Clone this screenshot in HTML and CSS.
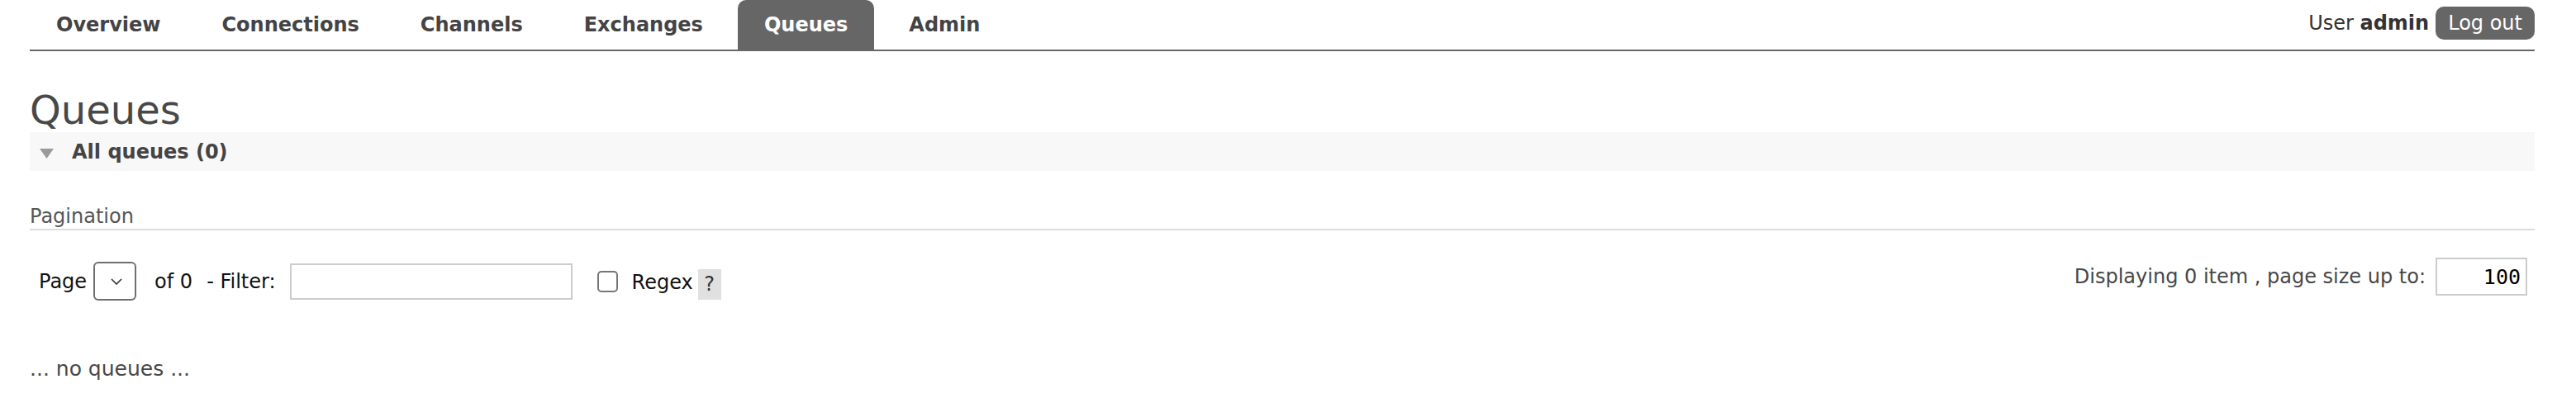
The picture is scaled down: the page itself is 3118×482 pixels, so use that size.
FILE: index.html
```html
<!DOCTYPE html>
<html lang="en">
<head>
    <meta charset="UTF-8">
    <meta name="viewport" content="width=device-width, initial-scale=1.0">
    <title>RabbitMQ Management</title>
    <link rel="stylesheet" href="styles.css">
</head>
<body>
    <div id="header">
        <ul id="tabs">
            <li><a href="#">Overview</a></li>
            <li><a href="#">Connections</a></li>
            <li><a href="#">Channels</a></li>
            <li><a href="#">Exchanges</a></li>
            <li><a href="#" class="selected">Queues</a></li>
            <li><a href="#">Admin</a></li>
        </ul>
        <div id="login">
            <span>User <b>admin</b></span>
            <button id="logout">Log out</button>
        </div>
    </div>

    <div id="main">
        <h1>Queues</h1>
        <div class="section">
            <h2>
                <svg class="arrow" width="17" height="12" viewBox="0 0 17 12"><polygon points="0,0 17,0 8.5,12" fill="#9a9a9a"/></svg>
                All queues (0)
            </h2>
            <div class="hider">
                <h3>Pagination</h3>
                <div class="pagination">
                    <div class="pagination-left">
                        <label for="page">Page</label>
                        <div class="select-wrap">
                            <select id="page"></select>
                            <svg class="chevron" width="14" height="8" viewBox="0 0 14 8"><polyline points="1,1 7,7 13,1" fill="none" stroke="#333" stroke-width="1.6"/></svg>
                        </div>
                        <span class="of">of 0</span>
                        <label for="filter" class="filter-label">- Filter:</label>
                        <input type="text" id="filter" class="filter">
                        <input type="checkbox" id="regex" class="regex">
                        <label for="regex" class="regex-label">Regex</label>
                        <span class="help">?</span>
                    </div>
                    <div class="pagination-right">
                        <label for="pagesize">Displaying 0 item , page size up to:</label>
                        <input type="text" id="pagesize" class="pagesize" value="100">
                    </div>
                </div>
                <p class="empty">... no queues ...</p>
            </div>
        </div>
    </div>
</body>
</html>
```

FILE: styles.css
```css
body {
    margin: 0;
    padding: 0 50px 0 36px;
    font-family: "DejaVu Sans", Verdana, sans-serif;
    font-size: 24px;
    color: #484848;
}

/* Top navigation */
#header {
    display: flex;
    justify-content: space-between;
    height: 60px;
    border-bottom: 2px solid #666;
}

#tabs {
    list-style: none;
    margin: 0;
    padding: 0;
    display: flex;
}

#tabs li {
    margin-right: 10px;
}

#tabs a {
    display: block;
    padding: 0 32px;
    line-height: 60px;
    font-weight: bold;
    color: #444;
    text-decoration: none;
    border-radius: 10px 10px 0 0;
}

#tabs a.selected {
    background: #666;
    color: #fff;
}

#login {
    display: flex;
    align-items: center;
    height: 40px;
    margin-top: 8px;
    color: #333;
}

#logout {
    margin-left: 8px;
    height: 40px;
    padding: 0 15px;
    font-family: inherit;
    font-size: 24px;
    color: #fff;
    background: #666;
    border: none;
    border-radius: 10px;
}

/* Page */
h1 {
    margin: 44px 0 0;
    font-size: 48px;
    font-weight: normal;
    line-height: 54px;
}

.section h2 {
    display: flex;
    align-items: center;
    height: 47px;
    margin: 0;
    padding-left: 12px;
    font-size: 24px;
    background: #f8f8f8;
    color: #444;
}

.section h2 .arrow {
    margin: 4px 22px 0 0;
}

h3 {
    margin: 41px 0 0;
    padding-bottom: 1px;
    font-size: 24px;
    font-weight: normal;
    line-height: 28px;
    color: #555;
    border-bottom: 2px solid #ddd;
}

.pagination {
    display: flex;
    justify-content: space-between;
    align-items: flex-start;
    margin-top: 33px;
}

.pagination-left {
    display: flex;
    align-items: center;
    padding: 5px 0 0 11px;
    font-size: 24px;
    color: #111;
}

.select-wrap {
    position: relative;
    margin: 0 22px 0 8px;
}

.select-wrap select {
    display: block;
    width: 52px;
    height: 47px;
    appearance: none;
    background: #fff;
    border: 2px solid #6e6e6e;
    border-radius: 6px;
}

.select-wrap .chevron {
    position: absolute;
    left: 21px;
    top: 20px;
}

.filter-label {
    margin-left: 17px;
}

.filter {
    box-sizing: border-box;
    width: 342px;
    height: 44px;
    margin: 0 0 0 17px;
    border: 2px solid #ccc;
}

.regex {
    appearance: none;
    width: 25px;
    height: 26px;
    margin: 0 0 0 30px;
    border: 2px solid #767676;
    border-radius: 5px;
    background: #fff;
}

.regex-label {
    margin-left: 17px;
    margin-top: 3px;
}

.help {
    width: 28px;
    height: 37px;
    margin: 7px 0 0 6px;
    line-height: 37px;
    text-align: center;
    background: #e0e0e0;
    color: #333;
}

.pagination-right {
    display: flex;
    align-items: center;
    padding-right: 9px;
    font-size: 24px;
    color: #484848;
}

.pagesize {
    box-sizing: border-box;
    width: 111px;
    height: 46px;
    margin: 0 0 0 12px;
    padding: 0 6px 0 0;
    border: 2px solid #ccc;
    font-family: "DejaVu Sans Mono", "Liberation Mono", monospace;
    font-size: 25px;
    text-align: right;
    color: #000;
}

.empty {
    margin: 69px 0 0;
    font-size: 25px;
    line-height: 28px;
}
```
